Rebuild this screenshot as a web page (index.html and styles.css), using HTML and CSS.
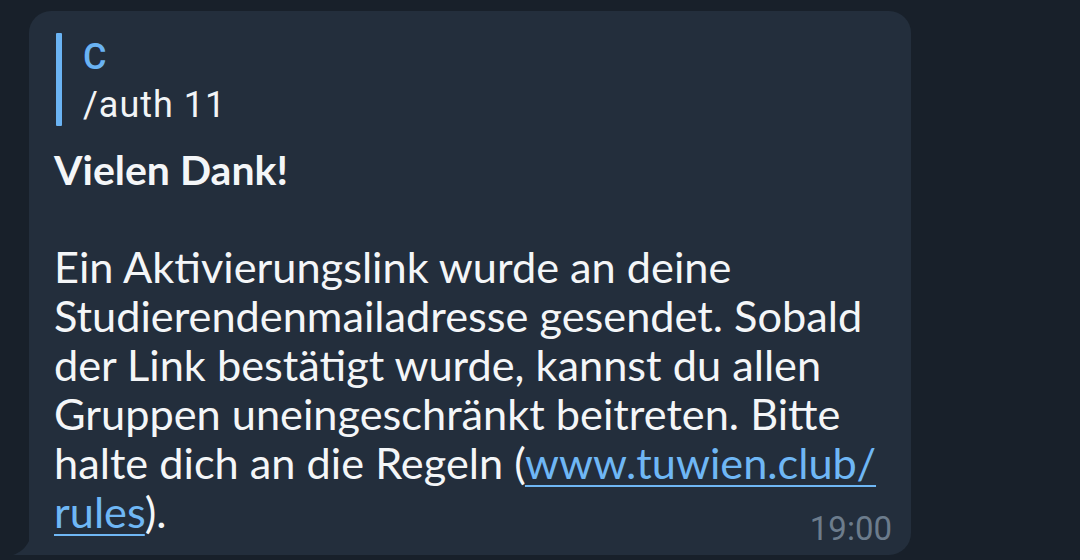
FILE: index.html
```html
<!DOCTYPE html>
<html lang="de">
<head>
<meta charset="utf-8">
<link rel="stylesheet" href="styles.css">
</head>
<body>
<div class="chat">
  <div class="bubble">
    <svg class="tail" width="20" height="14" viewBox="0 0 20 14"><path d="M16 0 L16 14 L0 14 C6 12 12 8 16 0 Z" fill="#232e3c"/></svg>
    <div class="reply">
      <div class="reply-bar"></div>
      <div class="reply-body">
        <div class="reply-name">C</div>
        <div class="reply-text">/auth 11</div>
      </div>
    </div>
    <div class="message">
      <p class="title">Vielen Dank!</p>
      <p class="text">Ein Aktivierungslink wurde an deine<br>Studierendenmailadresse gesendet. Sobald<br>der Link bestätigt wurde, kannst du allen<br>Gruppen uneingeschränkt beitreten. Bitte<br>halte dich an die Regeln (<a href="#" class="link">www.tuwien.club/<br>rules</a>).</p>
    </div>
    <span class="time">19:00</span>
  </div>
</div>
</body>
</html>
```

FILE: styles.css
```css
html, body {
  margin: 0;
  padding: 0;
  background: #18202a;
  width: 1080px;
  height: 560px;
  overflow: hidden;
}

.chat {
  padding: 11px 0 0 29px;
}

.bubble {
  position: relative;
  width: 882px;
  height: 544px;
  box-sizing: border-box;
  background: #232e3c;
  border-radius: 22px 22px 22px 0;
  padding: 22px 20px 0 25px;
}

.tail {
  position: absolute;
  left: -16px;
  bottom: 0;
}

.reply {
  display: flex;
  gap: 21px;
  margin-left: 2px;
}

.reply-bar {
  width: 6px;
  margin-bottom: 3px;
  background: #6ab3f3;
  border-radius: 1px;
}

.reply-body {
  font-family: Roboto, "Noto Sans", sans-serif;
  font-size: 36px;
  line-height: 48px;
}

.reply-name {
  color: #6ab3f3;
  font-weight: 500;
}

.reply-text {
  color: #f2f4f6;
  letter-spacing: 1px;
}

.message {
  font-family: Lato, "Noto Sans", sans-serif;
  font-size: 43.3px;
  line-height: 49px;
  color: #f4f6f8;
}

.message p {
  margin: 0;
}

.message .title {
  font-size: 41px;
  font-weight: 700;
  margin-top: 16px;
  margin-bottom: 48px;
}

.link {
  color: #6fb7f5;
  text-decoration: underline;
  text-decoration-thickness: 2px;
  text-underline-offset: 6px;
}

.time {
  position: absolute;
  right: 19px;
  bottom: 10px;
  font-family: Roboto, "Noto Sans", sans-serif;
  font-size: 33px;
  line-height: 1;
  color: #6c7c8c;
}
```
